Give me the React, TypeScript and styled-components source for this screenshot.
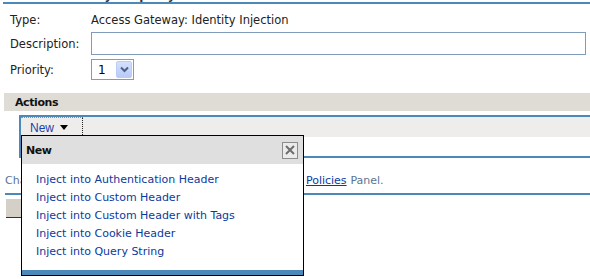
import React from 'react';
import styled, {createGlobalStyle} from 'styled-components';

const BLUE = '#4a89b9';

const GlobalStyle = createGlobalStyle`
  html, body {
    margin: 0;
    padding: 0;
    background: #fff;
  }

  body {
    font-family: "DejaVu Sans", Verdana, sans-serif;
    font-size: 11px;
    color: #222;
  }
`;

const Page = styled.div`
  position: relative;
  width: 590px;
  height: 279px;
  overflow: hidden;
`;

const TitleStrip = styled.div`
  height: 2px;
  overflow: hidden;
  display: flex;
  align-items: flex-end;
  padding-left: 72px;
  font-size: 12px;
  line-height: 14px;
  font-weight: bold;
  color: #333;
`;

const Section = styled.div`
  margin-left: 3px;
  border-top: 2px solid ${BLUE};
  padding-left: 7px;
`;

const FormRow = styled.div<{ $gap: number; $height: number }>`
  display: grid;
  grid-template-columns: 81px 1fr;
  align-items: center;
  margin-top: ${p => p.$gap}px;
  min-height: ${p => p.$height}px;
  font-size: 11.5px;
`;

const Label = styled.div`
  color: #222;
`;

const Value = styled.div`
  color: #222;
`;

const TextInput = styled.input`
  box-sizing: border-box;
  width: 495px;
  height: 23px;
  margin: 0;
  border: 1px solid #7f9db9;
  padding: 0 4px;
  font: inherit;
  outline: none;
`;

const Select = styled.div`
  box-sizing: border-box;
  display: flex;
  width: 43px;
  height: 21px;
  padding: 1px;
  border: 1px solid #7f9db9;
  font-size: 12px;
  color: #000;
`;

const SelectValue = styled.div`
  flex: 1;
  display: flex;
  align-items: center;
  padding-left: 5px;
`;

const SelectButton = styled.div`
  box-sizing: border-box;
  width: 16px;
  display: flex;
  align-items: center;
  justify-content: center;
  border: 1px solid #bccdf7;
  border-radius: 2px;
  background: linear-gradient(#d4e0fd, #b8cbf8);
`;

const ActionsBar = styled.div`
  margin: 13px 0 0 4px;
  height: 18px;
  padding-left: 11px;
  display: flex;
  align-items: center;
  background: #dfdcd5;
  font-weight: bold;
  font-size: 11px;
  letter-spacing: -0.4px;
  color: #111;
`;

const ActionsPanel = styled.div`
  position: relative;
  margin: 4px 0 0 19px;
  border-top: 2px solid ${BLUE};
  border-left: 2px solid ${BLUE};
  border-bottom: 2px solid ${BLUE};
`;

const Toolbar = styled.div`
  height: 20px;
  display: flex;
  background: #eeedeb;
`;

const MenuButton = styled.div`
  box-sizing: border-box;
  width: 62px;
  height: 20px;
  display: flex;
  align-items: center;
  gap: 6px;
  padding-left: 9px;
  border-top: 1px dotted #d9822b;
  border-right: 1px dotted #222;
  color: #1b3fa8;
  font-family: "Liberation Sans", Arial, sans-serif;
  font-size: 12px;
`;

const Caret = styled.span`
  width: 0;
  height: 0;
  border-left: 4.5px solid transparent;
  border-right: 4.5px solid transparent;
  border-top: 5px solid #000;
`;

const PanelBody = styled.div`
  height: 19px;
`;

const Popup = styled.div`
  position: absolute;
  left: 0;
  top: 18px;
  z-index: 10;
  box-sizing: border-box;
  width: 283px;
  height: 141px;
  display: flex;
  flex-direction: column;
  border: 1px solid #000;
  background: #fff;
`;

const PopupHeader = styled.div`
  height: 28px;
  display: flex;
  align-items: center;
  justify-content: space-between;
  padding: 0 5px 0 4px;
  background: #dfdfdf;
  font-weight: bold;
  letter-spacing: -0.4px;
  color: #111;
`;

const CloseButton = styled.div`
  box-sizing: border-box;
  width: 16px;
  height: 17px;
  display: flex;
  align-items: center;
  justify-content: center;
  border: 1px solid #8c8c8c;
  background: #ebebeb;
`;

const MenuList = styled.ul`
  flex: 1;
  list-style: none;
  margin: 0;
  padding: 7px 0 0 14px;
`;

const MenuItem = styled.li`
  line-height: 18px;
  color: #0b3a9e;
`;

const PopupFooter = styled.div`
  height: 5px;
  background: ${BLUE};
`;

const Notice = styled.div`
  margin: 15px 0 0 5px;
  line-height: 16px;
  word-spacing: 0.3px;
  color: #5b7490;
`;

const NoticeLink = styled.a`
  color: #0b3a9e;
  text-decoration: underline;
`;

const Rule = styled.div`
  margin: 4px 0 0 5px;
  border-top: 2px solid ${BLUE};
`;

const ButtonBar = styled.div`
  margin: 4px 0 0 6px;
  width: 120px;
  height: 18px;
  background: #d4d0c8;
  border-bottom: 1px solid #333;
`;

const menuItems = [
    'Inject into Authentication Header',
    'Inject into Custom Header',
    'Inject into Custom Header with Tags',
    'Inject into Cookie Header',
    'Inject into Query String',
];

export default function App() {
    return (
        <Page>
            <GlobalStyle/>
            <TitleStrip>Policy Property</TitleStrip>
            <Section>
                <FormRow $gap={5} $height={22}>
                    <Label>Type:</Label>
                    <Value>Access Gateway: Identity Injection</Value>
                </FormRow>
                <FormRow $gap={1} $height={23}>
                    <Label>Description:</Label>
                    <TextInput defaultValue=''/>
                </FormRow>
                <FormRow $gap={4} $height={21}>
                    <Label>Priority:</Label>
                    <Select>
                        <SelectValue>1</SelectValue>
                        <SelectButton>
                            <svg width='9' height='7' viewBox='0 0 9 7'>
                                <path d='M1 1.5 L4.5 5 L8 1.5' fill='none' stroke='#4d6185' strokeWidth='2'/>
                            </svg>
                        </SelectButton>
                    </Select>
                </FormRow>
            </Section>

            <ActionsBar>Actions</ActionsBar>

            <ActionsPanel>
                <Toolbar>
                    <MenuButton>
                        New <Caret/>
                    </MenuButton>
                </Toolbar>
                <PanelBody/>

                <Popup>
                    <PopupHeader>
                        <span>New</span>
                        <CloseButton>
                            <svg width='10' height='10' viewBox='0 0 10 10'>
                                <path d='M1 1 L9 9 M9 1 L1 9' stroke='#6e6e6e' strokeWidth='2'/>
                            </svg>
                        </CloseButton>
                    </PopupHeader>
                    <MenuList>
                        {menuItems.map(item => <MenuItem key={item}>{item}</MenuItem>)}
                    </MenuList>
                    <PopupFooter/>
                </Popup>
            </ActionsPanel>

            <Notice>
                Changes are not kept until you Apply Changes on the <NoticeLink>Policies</NoticeLink> Panel.
            </Notice>
            <Rule/>
            <ButtonBar/>
        </Page>
    );
}
